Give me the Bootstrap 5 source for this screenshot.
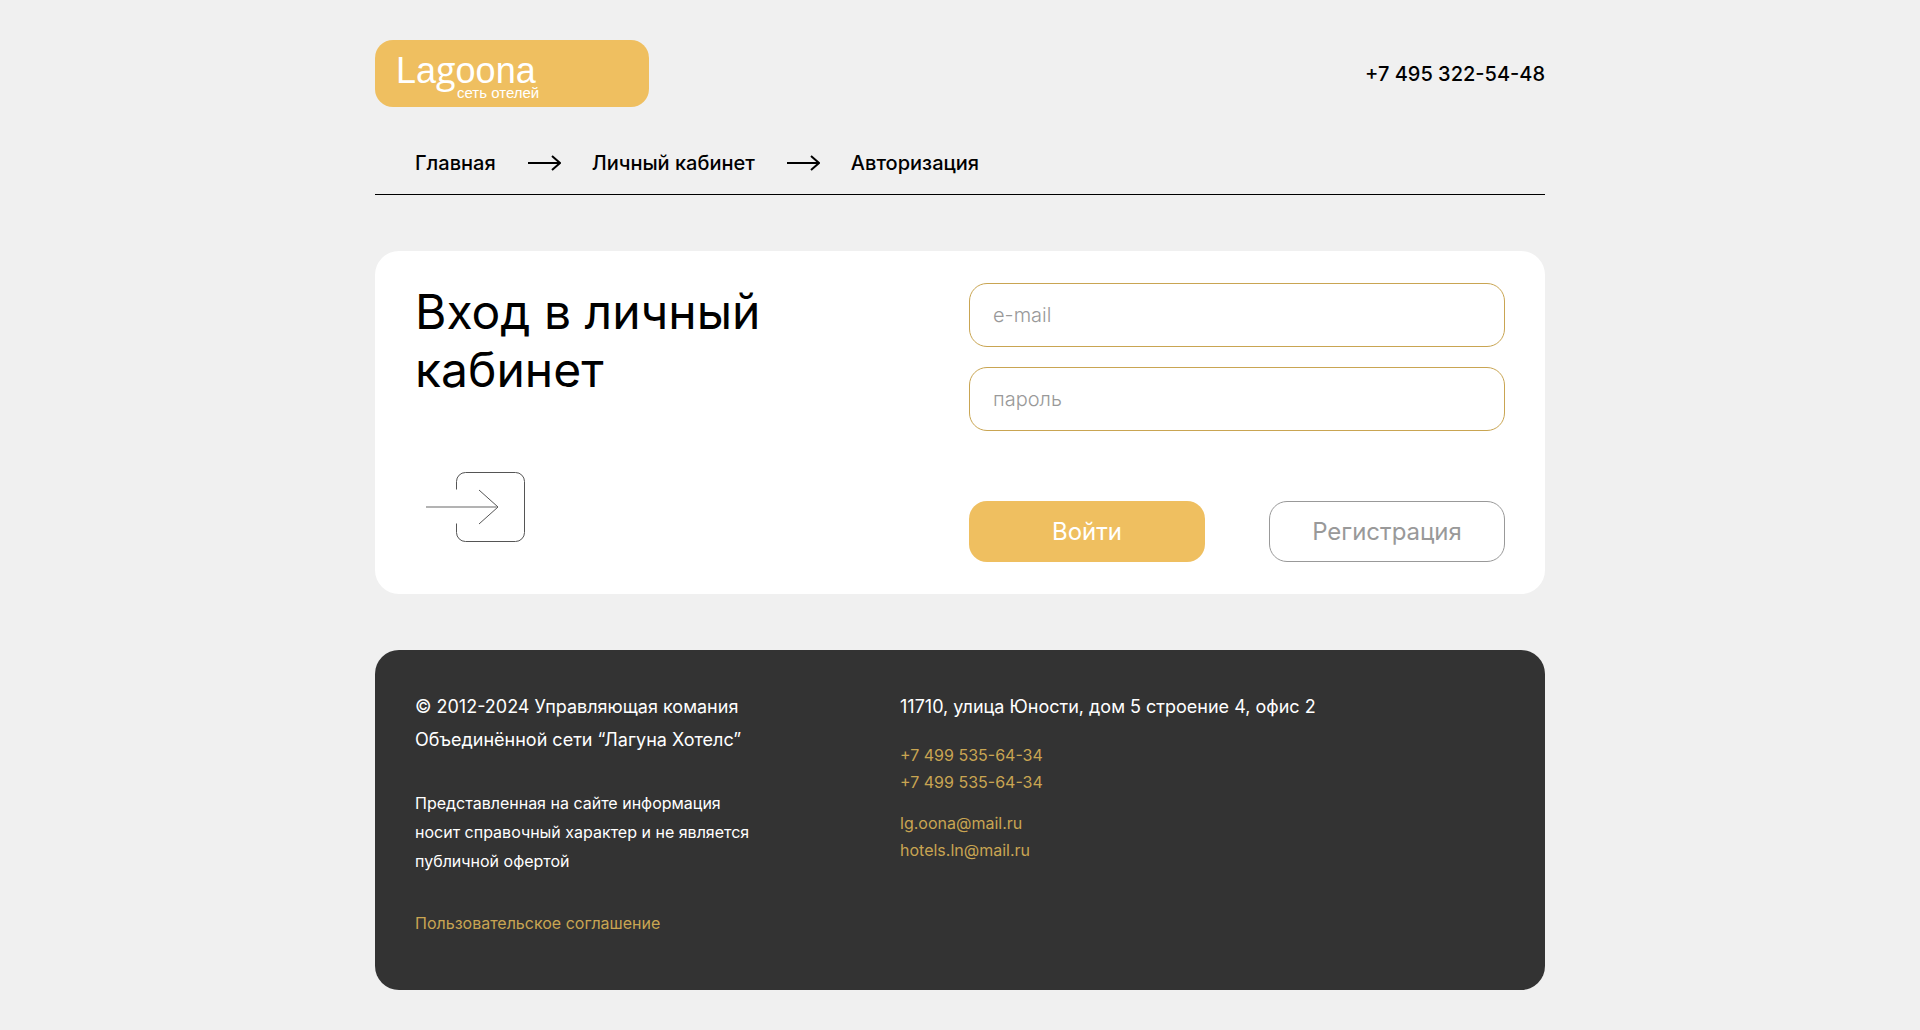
<!DOCTYPE html>
<html lang="ru">
<head>
<meta charset="utf-8">
<meta name="viewport" content="width=device-width, initial-scale=1">
<title>Lagoona — вход в личный кабинет</title>
<link href="https://cdn.jsdelivr.net/npm/bootstrap@5.3.0/dist/css/bootstrap.min.css" rel="stylesheet">
<style>
  body { background: #f0f0f0; color: #000; font-family: Inter, "Noto Sans", sans-serif; }
  a { color: inherit; text-decoration: none; }
  .page { max-width: 1170px; }
  .brand { width: 274px; height: 67px; padding: 14px 21px; border-radius: 18px; background: #efbf60; color: #fff; }
  .brand-name { font: 400 36px/32px "Liberation Sans", sans-serif; }
  .brand-g { font-family: "Open Sans", sans-serif; }
  .brand-sub { padding-left: 61px; font: 400 15px/12px "Liberation Sans", sans-serif; }
  .phone, .crumbs { font-size: 20px; line-height: 24px; font-weight: 500; }
  .crumbs { margin-top: 44px; padding: 0 40px 19px; border-bottom: 1px solid #000; }
  .crumbs ol { gap: 31px; }
  .login { margin-top: 56px; padding: 32px 40px; border-radius: 24px; background: #fff; }
  .login h1 { font-size: 48px; line-height: 58px; font-weight: 400; }
  .login-form { flex: 0 1 536px; }
  .field { height: 64px; padding: 0 23px; border: 1px solid #c9a552; border-radius: 18px; font-size: 20px; font-weight: 300; }
  .field + label + .field { margin-top: 20px; }
  .field::placeholder { color: #999; opacity: 1; }
  .field:focus { border-color: #c9a552; box-shadow: 0 0 0 3px #efbf6055; }
  .form-actions { gap: 64px; margin-top: 70px; }
  .action { height: 61px; border-radius: 18px; font-size: 24px; font-weight: 400; }
  .action-main, .action-main:hover { background: #efbf60; color: #fff; }
  .action-alt, .action-alt:hover { border-color: #999; color: #999; }
  .site-footer { margin: 56px 0 40px; padding: 40px 40px 52px; border-radius: 24px; background: #333; color: #fff; font-size: 16px; }
  .foot-left { flex: 0 1 485px; }
  .lead-text { font-size: 18px; line-height: 33px; }
  .legal { margin-top: 33px; line-height: 29px; }
  .gold { color: #c9a552; }
  .contacts { line-height: 27px; }
  .phones { margin: 19px 0 14px; }
</style>
<script src="https://cdn.jsdelivr.net/npm/bootstrap@5.3.0/dist/js/bootstrap.bundle.min.js" defer></script>
</head>
<body>
<div class="page container-fluid p-0">
  <header>
    <div class="d-flex justify-content-between align-items-center pt-4 mt-3">
      <a class="brand d-flex flex-column" href="#">
        <span class="brand-name">La<span class="brand-g">g</span>oona</span>
        <span class="brand-sub">сеть отелей</span>
      </a>
      <a class="phone" href="tel:+74953225448">+7 495 322-54-48</a>
    </div>
    <nav class="crumbs" aria-label="Навигация">
      <ol class="d-flex align-items-center list-unstyled m-0">
        <li><a href="#">Главная</a></li>
        <li class="d-flex" aria-hidden="true"><svg width="34" height="16" fill="none" stroke="#000" stroke-width="2"><path d="M1 8H33M25 1L33 8L25 15"/></svg></li>
        <li><a href="#">Личный кабинет</a></li>
        <li class="d-flex" aria-hidden="true"><svg width="34" height="16" fill="none" stroke="#000" stroke-width="2"><path d="M1 8H33M25 1L33 8L25 15"/></svg></li>
        <li><a href="#" aria-current="page">Авторизация</a></li>
      </ol>
    </nav>
  </header>

  <main class="login d-flex justify-content-between">
    <div class="d-flex flex-column justify-content-between">
      <h1 class="m-0">Вход в личный<br>кабинет</h1>
      <svg class="ms-2 mb-3" width="110" height="78" fill="none" stroke="#555" aria-hidden="true">
        <path d="M33.500 21.500V13.500A9 9 0 0 1 42.500 4.500H92.500A9 9 0 0 1 101.500 13.500V64.500A9 9 0 0 1 92.500 73.500H42.500A9 9 0 0 1 33.500 64.500V55.500"/>
        <path d="M56 22L75 39L56 56"/>
        <path d="M3 39H74" stroke="#b3b3b3" stroke-width="2"/>
      </svg>
    </div>
    <form class="login-form" onsubmit="return false">
      <label class="visually-hidden" for="email">e-mail</label>
      <input class="form-control field" id="email" type="email" placeholder="e-mail">
      <label class="visually-hidden" for="password">пароль</label>
      <input class="form-control field" id="password" type="password" placeholder="пароль">
      <div class="form-actions d-flex">
        <button class="btn action action-main flex-fill w-50" type="submit">Войти</button>
        <button class="btn action action-alt flex-fill w-50" type="button">Регистрация</button>
      </div>
    </form>
  </main>

  <footer class="site-footer d-flex">
    <div class="foot-left">
      <div class="lead-text">© 2012-2024 Управляющая комания<br>Объединённой сети “Лагуна Хотелс”</div>
      <div class="legal">Представленная на сайте информация<br>носит справочный характер и не является<br>публичной офертой</div>
      <div class="legal"><a class="gold" href="#">Пользовательское соглашение</a></div>
    </div>
    <address class="m-0 contacts">
      <div class="lead-text">11710, улица Юности, дом 5 строение 4, офис 2</div>
      <div class="phones d-flex flex-column align-items-start gold"><a href="tel:+74995356434">+7 499 535-64-34</a><a href="tel:+74995356434">+7 499 535-64-34</a></div>
      <div class="d-flex flex-column align-items-start gold"><a href="mailto:lg.oona@mail.ru">lg.oona@mail.ru</a><a href="mailto:hotels.ln@mail.ru">hotels.ln@mail.ru</a></div>
    </address>
  </footer>
</div>
</body>
</html>
